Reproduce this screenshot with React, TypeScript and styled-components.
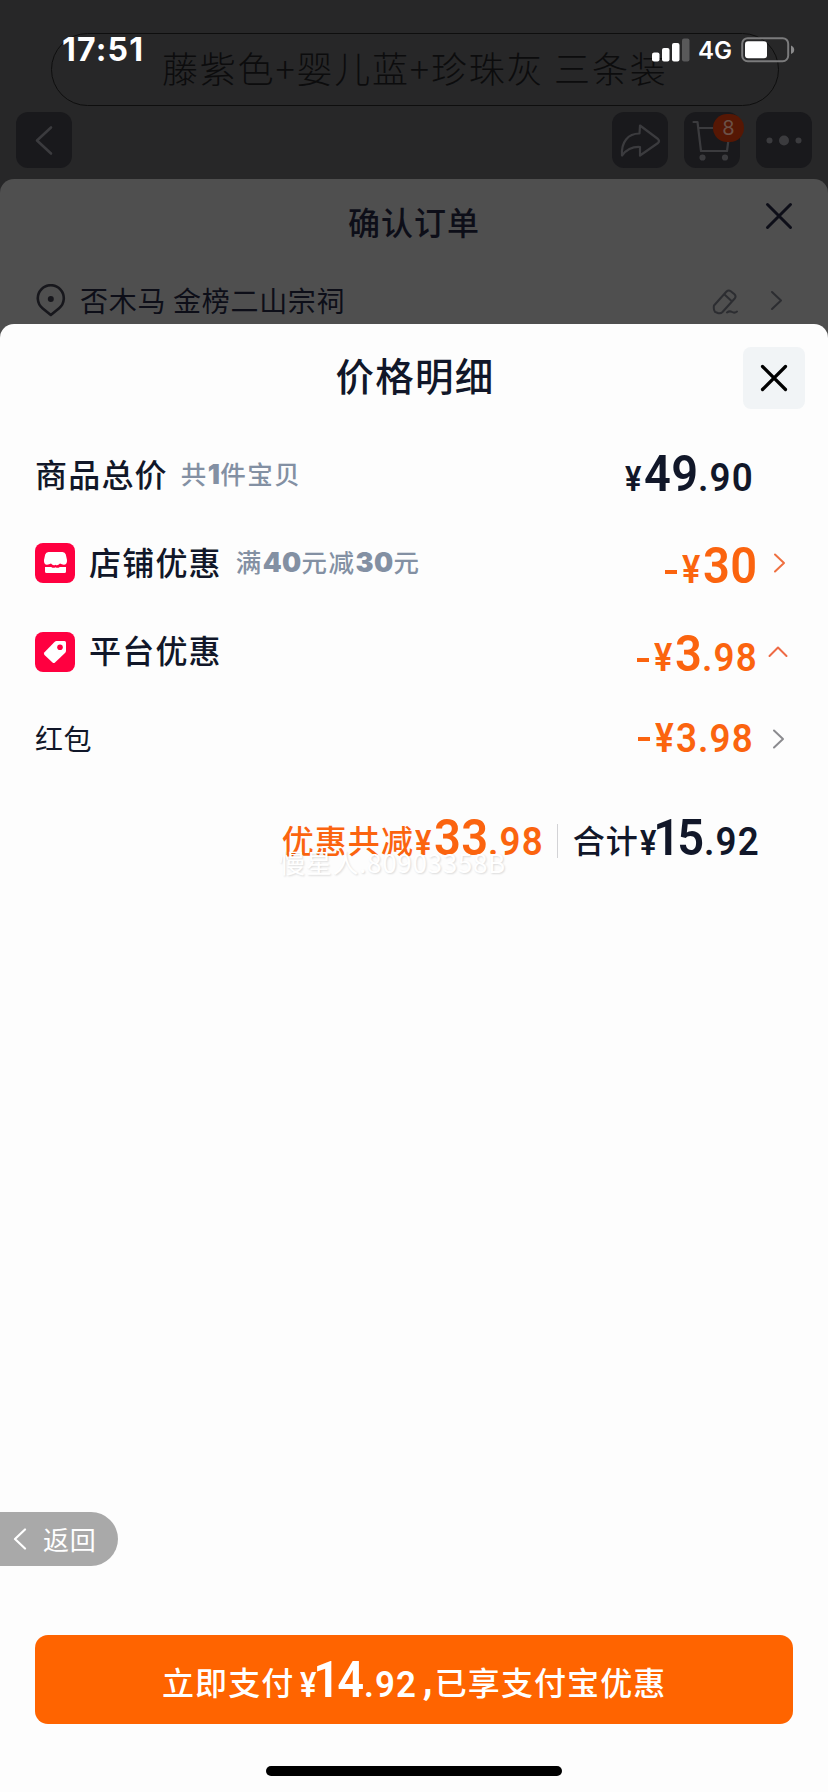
import React from "react";
import styled, { createGlobalStyle } from "styled-components";

const cjk = `"Noto Sans CJK SC", "Noto Sans", sans-serif`;

const GlobalStyle = createGlobalStyle`
  * { box-sizing: border-box; }
  body { margin: 0; background: #272727; font-family: ${cjk}; -webkit-font-smoothing: antialiased; }
  svg { display: block; flex: none; }
`;

const Page = styled.main`
  position: relative;
  width: 828px;
  height: 1792px;
  display: flex;
  flex-direction: column;
  overflow: hidden;
  background: #272728;
`;

/* ---------- status bar ---------- */

const StatusBar = styled.div`
  position: absolute;
  top: 30px;
  left: 0;
  right: 0;
  height: 40px;
  padding: 0 33px 0 62px;
  display: flex;
  align-items: center;
  justify-content: space-between;
  color: #fff;
  font-family: Inter, sans-serif;
`;

const Clock = styled.span`
  font-size: 32px;
  font-weight: 700;
  line-height: 40px;
  letter-spacing: 1.2px;
`;

const StatusIcons = styled.div`
  display: flex;
  align-items: center;
`;

const Network = styled.span`
  font-size: 24px;
  font-weight: 600;
  line-height: 40px;
  margin: 2px 9px 0 8px;
`;

/* ---------- product page behind the sheets ---------- */

const ProductHeader = styled.header`
  height: 179px;
  flex: none;
  padding-top: 33px;
`;

const VariantPill = styled.div`
  width: 728px;
  height: 73px;
  margin-left: 51px;
  padding-left: 110px;
  border: 1px solid #0e0e0e;
  border-radius: 37px;
  color: #0c0c0d;
  font-size: 36px;
  font-weight: 300;
  letter-spacing: 1.8px;
  line-height: 66px;
  white-space: nowrap;
`;

const HeaderActions = styled.div`
  display: flex;
  gap: 16px;
  padding: 6px 16px 0;
`;

const HeaderButton = styled.div<{ $first?: boolean }>`
  position: relative;
  width: 56px;
  height: 56px;
  margin-right: ${(p) => (p.$first ? "auto" : "0")};
  border-radius: 12px;
  background: #19191c;
  color: #3b3b3e;
`;

const CartBadge = styled.span`
  position: absolute;
  left: 29px;
  top: 2px;
  width: 31px;
  height: 28px;
  border-radius: 14px;
  background: #561704;
  color: #6b5148;
  font: 400 20px/28px Inter, sans-serif;
  text-align: center;
`;

/* ---------- order sheet ---------- */

const OrderSheet = styled.section`
  flex: 1;
  display: flex;
  flex-direction: column;
  border-radius: 14px 14px 0 0;
  background: #4f4f4f;
  color: #0d0e18;
`;

const OrderTitleBar = styled.div`
  height: 88px;
  display: grid;
  grid-template-columns: 1fr auto 1fr;
  padding-right: 35px;
  padding-left: 35px;
`;

const OrderTitle = styled.h2`
  grid-column: 2;
  margin: 0;
  font-size: 32px;
  font-weight: 500;
  letter-spacing: 1px;
  line-height: 85px;
`;

const OrderClose = styled.div`
  justify-self: end;
  padding-top: 23px;
`;

const AddressRow = styled.div`
  height: 57px;
  display: flex;
  padding: 17px 45px 0 36px;
`;

const AddressText = styled.span`
  margin-left: 14px;
  margin-right: auto;
  margin-top: -2px;
  font-size: 28px;
  font-weight: 400;
  letter-spacing: 0.7px;
  line-height: 36px;
`;

const AddressIcons = styled.div`
  display: flex;
  gap: 32px;
  color: #2c2d31;
`;

const AddressIcon = styled.span<{ $top: number }>`
  padding-top: ${(p) => p.$top}px;
`;

/* ---------- price sheet ---------- */

const PriceSheet = styled.section`
  flex: 1;
  display: flex;
  flex-direction: column;
  border-radius: 14px 14px 0 0;
  background: #fdfdfd;
  color: #111729;
`;

const PriceTitleBar = styled.div`
  height: 108px;
  display: grid;
  grid-template-columns: 1fr auto 1fr;
  padding: 0 23px;
`;

const PriceTitle = styled.h1`
  grid-column: 2;
  margin: 0 0 0 2px;
  font-size: 38.5px;
  font-weight: 500;
  letter-spacing: 1.2px;
  line-height: 101px;
`;

const CloseButton = styled.div`
  justify-self: end;
  width: 62px;
  height: 62px;
  margin-top: 23px;
  border-radius: 8px;
  background: #f1f4f6;
  display: grid;
  place-items: center;
  color: #000;
`;

const Row = styled.div<{ $h: number; $right: number }>`
  height: ${(p) => p.$h}px;
  padding: 0 ${(p) => p.$right}px 0 35px;
  display: flex;
  align-items: center;
`;

const Label = styled.span<{ $small?: boolean }>`
  padding-bottom: ${(p) => (p.$small ? 2 : 5)}px;
  font-size: ${(p) => (p.$small ? 28 : 32)}px;
  font-weight: ${(p) => (p.$small ? 400 : 500)};
  letter-spacing: ${(p) => (p.$small ? 0.5 : 1.2)}px;
  line-height: 48px;
  white-space: nowrap;
`;

const RedTile = styled.span`
  width: 40px;
  height: 40px;
  margin-right: 14px;
  border-radius: 8px;
  background: #ff0040;
`;

const Note = styled.span<{ $gap: number }>`
  margin-left: ${(p) => p.$gap}px;
  padding-bottom: 2px;
  color: #8390a3;
  font-size: 25.5px;
  font-weight: 500;
  letter-spacing: 1.5px;
  line-height: 40px;
  white-space: nowrap;
  b { font-family: Inter, sans-serif; font-weight: 900; font-size: 27px; letter-spacing: 0.3px; }
`;

const AmountBox = styled.span<{ $color?: string; $push?: boolean; $shift: number; $before: number }>`
  display: inline-flex;
  align-items: baseline;
  margin-left: ${(p) => (p.$push ? "auto" : `${p.$before}px`)};
  padding-top: ${(p) => p.$shift}px;
  color: ${(p) => p.$color ?? "inherit"};
  font-family: Roboto, sans-serif;
  font-weight: 600;
  line-height: 48px;
  letter-spacing: 0;
  white-space: nowrap;
`;

const Minus = styled.span<{ $raise: number }>`
  width: 12px;
  height: 4px;
  margin-right: 5px;
  align-self: center;
  position: relative;
  top: ${(p) => 4 - p.$raise}px;
  background: currentColor;
`;

/* Roboto is condensed slightly to get the narrow price figures. */
const Figure = styled.span<{ $size: number; $width: number; $squeeze: number; $track?: number; $pull?: number }>`
  display: inline-block;
  width: ${(p) => p.$width}px;
  margin-left: ${(p) => -(p.$pull ?? 0)}px;
  font-size: ${(p) => p.$size}px;
  letter-spacing: ${(p) => p.$track ?? 0}px;
  transform: scaleX(${(p) => p.$squeeze});
  transform-origin: 0 50%;
`;

/* The figure 1 sits tighter against the digit after it. */
const LeadingOne = styled.span`
  margin-left: 3.5px;
  margin-right: -3.5px;
`;

type AmountProps = {
  whole: string;
  cents?: string;
  minus?: boolean;
  raise?: number;
  yen?: number;
  size?: number;
  centSize?: number;
  color?: string;
  push?: boolean;
  shift?: number;
  before?: number;
};

function Amount({ whole, cents, minus, raise = 0, yen = 35, size = 50, centSize = 39.5, color, push, shift = 0, before = 0 }: AmountProps) {
  const small = size < 45;
  const one = whole[0] === "1";
  return (
    <AmountBox $color={color} $push={push} $shift={shift} $before={before}>
      {minus && <Minus $raise={raise} />}
      <Figure $size={yen} $width={yen * 0.53} $squeeze={0.88}>¥</Figure>
      <Figure
        $size={size}
        $width={small ? 22 : 27 * whole.length}
        $squeeze={small ? 0.92 : 0.94}
        $track={small ? 1 : 0.4}
        $pull={one ? 8.5 : 0}
      >
        {one ? <><LeadingOne>1</LeadingOne>{whole.slice(1)}</> : whole}
      </Figure>
      {cents && (
        <Figure $size={centSize} $width={centSize * 1.42} $squeeze={0.93} $track={1.2}>
          .{cents}
        </Figure>
      )}
    </AmountBox>
  );
}

const ArrowSlot = styled.span<{ $w: number; $gap: number }>`
  width: ${(p) => p.$w}px;
  margin-left: ${(p) => p.$gap}px;
`;

const Summary = styled.div`
  position: relative;
  height: 96px;
  padding: 17px 68px 0 0;
  display: flex;
  justify-content: flex-end;
  align-items: center;
`;

const SummaryLabel = styled.span<{ $color?: string }>`
  color: ${(p) => p.$color ?? "inherit"};
  font-size: 32px;
  font-weight: 500;
  letter-spacing: 1.1px;
  line-height: 48px;
`;

const Divider = styled.i`
  width: 1px;
  height: 34px;
  margin: 4px 15px 0 13px;
  background: #d3d3d6;
`;

const Watermark = styled.span`
  position: absolute;
  left: 279px;
  top: 62px;
  color: #fff;
  font-size: 26px;
  line-height: 36px;
  letter-spacing: 0.7px;
  text-shadow: 1px 1px 2px rgba(0, 0, 0, 0.14);
  white-space: nowrap;
`;

const BackPill = styled.div`
  width: 118px;
  height: 54px;
  margin-top: auto;
  padding-left: 13px;
  border-radius: 0 27px 27px 0;
  background: #a9a9a9;
  color: #fff;
  display: flex;
  align-items: center;
  gap: 16px;
  font-size: 26px;
  letter-spacing: 0.8px;
  line-height: 50px;
`;

const PayButton = styled.div`
  height: 89px;
  margin: 69px 35px 0;
  padding: 2px 0 0 127px;
  border-radius: 13px;
  background: #ff6400;
  color: #fff;
  display: flex;
  align-items: center;
  font-size: 32px;
  font-weight: 500;
  letter-spacing: 1.1px;
  line-height: 48px;
  white-space: nowrap;
`;

const Comma = styled.span`
  width: 12px;
  margin-left: 5px;
  font-family: Roboto, sans-serif;
  font-size: 40px;
  font-weight: 700;
`;

const HomeIndicator = styled.div`
  width: 296px;
  height: 10px;
  margin: 42px auto 16px;
  border-radius: 5px;
  background: #000;
`;

/* ---------- icons ---------- */

const Cross = ({ w = 28, sw = 3.2 }: { w?: number; sw?: number }) => (
  <svg width={w} height={w} viewBox="0 0 28 28" fill="none" stroke="currentColor" strokeWidth={sw} strokeLinecap="round">
    <path d="M2.5 2.5 25.5 25.5M25.5 2.5 2.5 25.5" />
  </svg>
);

const ArrowRight = ({ color, h = 20, w = 13 }: { color: string; h?: number; w?: number }) => (
  <svg width={w} height={h} viewBox="0 0 13 20" fill="none" stroke={color} strokeWidth="2" strokeLinecap="round" strokeLinejoin="round">
    <path d="M2 1.5 11 10 2 18.5" />
  </svg>
);

const ArrowUp = ({ color }: { color: string }) => (
  <svg width="20" height="13" viewBox="0 0 20 13" fill="none" stroke={color} strokeWidth="2" strokeLinecap="round" strokeLinejoin="round">
    <path d="M1.5 11 10 2.5 18.5 11" />
  </svg>
);

const Signal = () => (
  <svg width="38" height="24" viewBox="0 0 38 24" fill="#fff">
    <rect x="0" y="14.5" width="7.5" height="9" rx="2" />
    <rect x="10" y="10" width="7.5" height="13.5" rx="2" />
    <rect x="20" y="5" width="7.5" height="18.5" rx="2" />
    <rect x="30" y="0.5" width="7.5" height="23" rx="2" fill="#59595a" />
  </svg>
);

const Battery = () => (
  <svg width="54" height="26" viewBox="0 0 54 26">
    <rect x="1.2" y="1.2" width="46" height="23" rx="5.5" fill="none" stroke="#7b7b7c" strokeWidth="2" />
    <rect x="4" y="4.2" width="22" height="17" rx="3" fill="#fff" />
    <path d="M50 8.5c2 .7 3.2 2.3 3.2 4.3s-1.2 3.6-3.2 4.3z" fill="#8a8a8b" />
  </svg>
);

const ShareIcon = () => (
  <svg width="56" height="56" viewBox="0 0 56 56" fill="none" stroke="currentColor" strokeWidth="2.2" strokeLinejoin="round">
    <path d="M28 13.5 46 27Q48 29 46 31L28 43.5V35C20 34.5 15 37 10 43.5C9 30 16 21.5 27.5 21.5Z" />
  </svg>
);

const CartIcon = () => (
  <svg width="56" height="56" viewBox="0 0 56 56" fill="none" stroke="currentColor" strokeWidth="2.2" strokeLinejoin="round" strokeLinecap="round">
    <path d="M9.5 10H13.5L17 39H43L46 16H15" />
    <circle cx="18.5" cy="45.5" r="2" fill="currentColor" />
    <circle cx="41" cy="45.5" r="2" fill="currentColor" />
  </svg>
);

const MoreIcon = () => (
  <svg width="56" height="56" viewBox="0 0 56 56" fill="currentColor">
    <circle cx="13.5" cy="28.5" r="3" />
    <circle cx="28" cy="28.5" r="5" />
    <circle cx="42.5" cy="28.5" r="3" />
  </svg>
);

const BackIcon = () => (
  <svg width="56" height="56" viewBox="0 0 56 56" fill="none" stroke="currentColor" strokeWidth="2.6" strokeLinecap="round" strokeLinejoin="round">
    <path d="M35 15.5 21 28.5 35 41.5" />
  </svg>
);

const PinIcon = () => (
  <svg width="30" height="33" viewBox="0 0 30 33" fill="none" stroke="#17171c" strokeWidth="2.6" strokeLinejoin="round">
    <path d="M14.8 31 6.5 24.2A13 13 0 1 1 23.1 24.2Z" />
    <circle cx="14.8" cy="15" r="3" fill="#17171c" stroke="none" />
  </svg>
);

const EraserIcon = () => (
  <svg width="26" height="27" viewBox="0 0 26 27" fill="none" stroke="currentColor" strokeWidth="2" strokeLinejoin="round" strokeLinecap="round">
    <path d="M2 17.5 14.5 3.5Q16.5 1.5 18.8 3.2L22.5 6.3Q24.5 8.3 22.7 10.5L10.5 24Q8.5 26 5.8 25L3 23.8Q1.2 21.5 2 17.5ZM12.5 6.5 19.8 13.2" />
    <path d="M15 24.5Q17.5 22.5 20 24T25 23.5" />
  </svg>
);

const ShopIcon = () => (
  <svg width="40" height="40" viewBox="0 0 40 40" fill="#fff">
    <path d="M13.5 9H27.5Q30 9 30.8 11.5L32 17Q32.3 21.7 28.8 21.7Q26.7 21.7 25 20.6Q22.5 23.3 20.5 21.8Q18 23.3 16 20.6Q14.3 21.7 12 21.7Q8.7 21.7 9 17L10.2 11.5Q11 9 13.5 9Z" />
    <path d="M10 24H16.2Q18.5 25.6 20.5 24.2Q22.5 25.6 24.8 24H31V28.5Q31 30 29.5 30H11.5Q10 30 10 28.5Z" />
  </svg>
);

const TagIcon = () => (
  <svg width="40" height="40" viewBox="0 0 40 40" fill="#fff">
    <path d="M21.5 9H29.5Q31 9 31 10.5V18.5Q31 20 30 21L20 30.5Q18.8 31.5 17.5 30.5L9.5 23Q8.3 21.7 9.5 20.3L19.5 10Q20.5 9 21.5 9Z" />
    <circle cx="25" cy="15.2" r="2.8" fill="#ff0040" />
  </svg>
);

const orange = "#fb640f";

export default function App() {
  return (
    <Page>
      <GlobalStyle />
      <ProductHeader>
        <VariantPill>藤紫色+婴儿蓝+珍珠灰 三条装</VariantPill>
        <HeaderActions>
          <HeaderButton $first><BackIcon /></HeaderButton>
          <HeaderButton><ShareIcon /></HeaderButton>
          <HeaderButton><CartIcon /><CartBadge>8</CartBadge></HeaderButton>
          <HeaderButton><MoreIcon /></HeaderButton>
        </HeaderActions>
      </ProductHeader>

      <StatusBar>
        <Clock>17:51</Clock>
        <StatusIcons>
          <Signal />
          <Network>4G</Network>
          <Battery />
        </StatusIcons>
      </StatusBar>

      <OrderSheet>
        <OrderTitleBar>
          <OrderTitle>确认订单</OrderTitle>
          <OrderClose><Cross sw={3} /></OrderClose>
        </OrderTitleBar>
        <AddressRow>
          <PinIcon />
          <AddressText>否木马 金榜二山宗祠</AddressText>
          <AddressIcons>
            <AddressIcon $top={4}><EraserIcon /></AddressIcon>
            <AddressIcon $top={6}><ArrowRight color="currentColor" h={21} /></AddressIcon>
          </AddressIcons>
        </AddressRow>

        <PriceSheet>
          <PriceTitleBar>
            <PriceTitle>价格明细</PriceTitle>
            <CloseButton><Cross /></CloseButton>
          </PriceTitleBar>

          <Row $h={86} $right={74}>
            <Label>商品总价</Label>
            <Note $gap={13}>共<b>1</b>件宝贝</Note>
            <Amount push whole="49" cents="90" shift={4} />
          </Row>
          <Row $h={90} $right={42}>
            <RedTile><ShopIcon /></RedTile>
            <Label>店铺优惠</Label>
            <Note $gap={14}>满<b>40</b>元减<b>30</b>元</Note>
            <Amount push minus yen={39} whole="30" color={orange} shift={9} />
            <ArrowSlot $w={13} $gap={16}><ArrowRight color="#ef7040" /></ArrowSlot>
          </Row>
          <Row $h={87} $right={40}>
            <RedTile><TagIcon /></RedTile>
            <Label>平台优惠</Label>
            <Amount push minus yen={39} whole="3" cents="98" color={orange} shift={9} />
            <ArrowSlot $w={20} $gap={10}><ArrowUp color="#ee6a45" /></ArrowSlot>
          </Row>
          <Row $h={87} $right={43}>
            <Label $small>红包</Label>
            <Amount push minus raise={4} yen={40} size={40} whole="3" cents="98" color={orange} />
            <ArrowSlot $w={13} $gap={18}><ArrowRight color="#8b8b8f" /></ArrowSlot>
          </Row>

          <Summary>
            <SummaryLabel $color={orange}>优惠共减</SummaryLabel>
            <Amount whole="33" cents="98" color={orange} before={1} shift={5} />
            <Divider />
            <SummaryLabel>合计</SummaryLabel>
            <Amount whole="15" cents="92" before={1} shift={5} />
            <Watermark>慢星人.80903358B</Watermark>
          </Summary>

          <BackPill>
            <svg width="14" height="22" viewBox="0 0 14 22" fill="none" stroke="#fff" strokeWidth="2.2" strokeLinecap="round" strokeLinejoin="round">
              <path d="M12 1.5 2 11 12 20.5" />
            </svg>
            返回
          </BackPill>
          <PayButton>
            <span>立即支付</span>
            <Amount whole="14" cents="92" centSize={37.5} before={6} shift={4} />
            <Comma>,</Comma>
            <span>已享支付宝优惠</span>
          </PayButton>
          <HomeIndicator />
        </PriceSheet>
      </OrderSheet>
    </Page>
  );
}
